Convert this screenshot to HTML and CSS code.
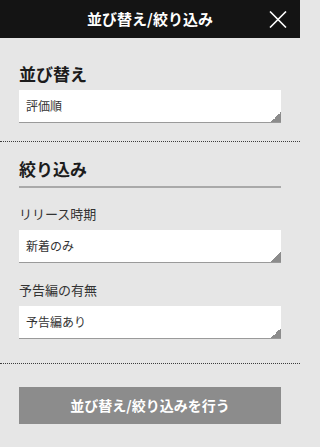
FILE: index.html
```html
<!DOCTYPE html>
<html lang="ja">
<head>
<meta charset="utf-8">
<title>並び替え/絞り込み</title>
<link rel="stylesheet" href="styles.css">
</head>
<body>
<div class="panel">
  <header class="topbar">
    <span class="spacer"></span>
    <h1 class="title">並び替え/絞り込み</h1>
    <button class="close" aria-label="閉じる">
      <svg width="18" height="17" viewBox="0 0 18 17" aria-hidden="true">
        <path d="M1 0.5 L17 16.5 M17 0.5 L1 16.5" stroke="#ffffff" stroke-width="1.6" fill="none"/>
      </svg>
    </button>
  </header>

  <section class="section section-sort">
    <h2 class="heading">並び替え</h2>
    <div class="select">評価順</div>
  </section>

  <section class="section section-filter">
    <h2 class="heading heading-underline">絞り込み</h2>
    <div class="field">
      <div class="label">リリース時期</div>
      <div class="select">新着のみ</div>
    </div>
    <div class="field">
      <div class="label">予告編の有無</div>
      <div class="select">予告編あり</div>
    </div>
  </section>

  <div class="actions">
    <button class="submit">並び替え/絞り込みを行う</button>
  </div>
</div>
</body>
</html>
```

FILE: styles.css
```css
* {
  box-sizing: border-box;
}

html, body {
  margin: 0;
  padding: 0;
  background: #e6e6e6;
}

body {
  font-family: "Noto Sans CJK JP", "Noto Sans", "Liberation Sans", sans-serif;
  color: #222222;
  min-height: 447px;
}

.panel {
  width: 300px;
}

.topbar {
  height: 38px;
  background: #141414;
  display: grid;
  grid-template-columns: 1fr auto 1fr;
  align-items: center;
}

.title {
  margin: 0;
  color: #ffffff;
  font-size: 15px;
  font-weight: 700;
  line-height: 38px;
  letter-spacing: 0;
}

.close {
  justify-self: end;
  margin: 0 13px 0 0;
  padding: 0;
  border: 0;
  background: transparent;
  display: flex;
  align-items: center;
  justify-content: center;
  width: 18px;
  height: 17px;
  cursor: pointer;
}

.section {
  padding-left: 19px;
  padding-right: 19px;
  border-bottom: 1px dotted #3c3c3c;
}

.section-sort {
  padding-top: 24px;
  padding-bottom: 18px;
}

.section-filter {
  padding-top: 15px;
  padding-bottom: 24px;
}

.heading {
  margin: 0 0 4px;
  font-size: 17px;
  font-weight: 700;
  line-height: 24px;
  color: #1c1c1c;
}

.heading-underline {
  margin: 0;
  padding-bottom: 5px;
  border-bottom: 2px solid #a9a9a9;
}

.field {
  margin-top: 17px;
}

.field + .field {
  margin-top: 18px;
}

.label {
  font-size: 13px;
  line-height: 18px;
  color: #333333;
  margin-bottom: 7px;
}

.select {
  height: 33px;
  background-color: #ffffff;
  background-image: linear-gradient(to top left, #8c8c8c 50%, transparent 50%);
  background-size: 10px 10px;
  background-position: right 0 bottom 0;
  background-repeat: no-repeat;
  border-bottom: 1px solid #9a9a9a;
  padding: 0 7px;
  font-size: 12px;
  line-height: 32px;
  color: #333333;
}

.actions {
  padding: 23px 19px 0;
}

.submit {
  display: block;
  width: 100%;
  height: 37px;
  border: 0;
  background: #8c8c8c;
  color: #ffffff;
  font-family: "Noto Sans CJK JP", "Noto Sans", "Liberation Sans", sans-serif;
  font-size: 14px;
  font-weight: 700;
  line-height: 37px;
  padding: 0;
  cursor: pointer;
}
```
